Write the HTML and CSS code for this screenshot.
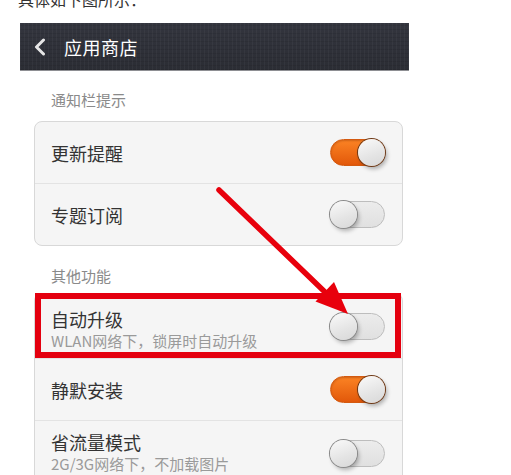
FILE: index.html
```html
<!DOCTYPE html>
<html lang="zh-CN">
<head>
<meta charset="utf-8">
<title>应用商店</title>
<link rel="stylesheet" href="styles.css">
</head>
<body>
<div class="intro"><p>具体如下图所示：</p></div>
<div class="phone">
  <div class="appbar">
    <svg class="back" width="12" height="18" viewBox="0 0 12 18"><polyline points="9.5,2 2.5,9 9.5,16" fill="none" stroke="#e6e6e6" stroke-width="3" stroke-linecap="round" stroke-linejoin="round"/></svg>
    <span class="title">应用商店</span>
  </div>
  <div class="content">
    <div class="section-label">通知栏提示</div>
    <div class="card">
      <div class="row">
        <span class="label">更新提醒</span>
        <span class="switch on"><span class="knob"></span></span>
      </div>
      <div class="row">
        <span class="label">专题订阅</span>
        <span class="switch"><span class="knob"></span></span>
      </div>
    </div>
    <div class="section-label second">其他功能</div>
    <div class="card open">
      <div class="row two marked">
        <div class="text">
          <span class="label">自动升级</span>
          <span class="sub">WLAN网络下，锁屏时自动升级</span>
        </div>
        <span class="switch"><span class="knob"></span></span>
        <span class="redbox"></span>
      </div>
      <div class="row">
        <span class="label">静默安装</span>
        <span class="switch on"><span class="knob"></span></span>
      </div>
      <div class="row two">
        <div class="text compact">
          <span class="label">省流量模式</span>
          <span class="sub">2G/3G网络下，不加载图片</span>
        </div>
        <span class="switch"><span class="knob"></span></span>
      </div>
    </div>
  </div>
</div>
<svg class="arrow" width="511" height="475" viewBox="0 0 511 475">
  <line x1="219" y1="190" x2="327" y2="294" stroke="#e8000c" stroke-width="5.5" stroke-linecap="round"/>
  <polygon points="348,314 315.5,301.5 334,282" fill="#e8000c"/>
</svg>
</body>
</html>
```
FILE: styles.css
```css
html, body {
  margin: 0;
  padding: 0;
  background: #ffffff;
  overflow: hidden;
}
body {
  font-family: "Noto Sans CJK SC", "Noto Sans", sans-serif;
  color: #333333;
  width: 511px;
  height: 475px;
  position: relative;
}
.intro {
  display: flex;
  height: 23px;
  padding-left: 18px;
}
.intro p {
  margin: -11px 0 0;
  font-size: 16px;
  line-height: 20px;
  color: #333333;
}
.phone {
  margin-left: 20px;
  width: 389px;
}
.appbar {
  height: 47px;
  display: flex;
  align-items: center;
  padding-left: 14px;
  background-color: #2f3139;
  background-image:
    repeating-linear-gradient(90deg, rgba(255,255,255,0.035) 0 1px, transparent 1px 4px),
    repeating-linear-gradient(0deg, rgba(0,0,0,0.08) 0 1px, transparent 1px 4px),
    linear-gradient(#33353e, #2b2d34);
  border-bottom: 1px solid #8e8f93;
}
.back {
  display: block;
}
.title {
  margin-left: 18px;
  color: #ffffff;
  font-size: 18px;
  line-height: 24px;
  letter-spacing: 0.5px;
}
.content {
  padding: 0 6px 0 14px;
  background: #ffffff;
}
.section-label {
  font-size: 15px;
  line-height: 20px;
  color: #8a8a8a;
  padding: 19px 0 11px 17px;
}
.section-label.second {
  padding: 20px 0 7px 17px;
}
.card {
  background: #f5f5f5;
  border: 1px solid #d8d8d8;
  border-radius: 8px;
}
.card.open {
  border-bottom: none;
  border-radius: 8px 8px 0 0;
}
.row {
  height: 61px;
  display: flex;
  align-items: center;
  justify-content: space-between;
  padding: 0 17px 0 16px;
}
.row + .row {
  border-top: 1px solid #e3e3e3;
}
.row.two {
  height: 64px;
}
.row.marked {
  position: relative;
}
.text {
  display: flex;
  flex-direction: column;
  margin-top: 8px;
}
.text.compact {
  margin-top: 0;
}
.label {
  font-size: 18px;
  line-height: 22px;
  color: #333333;
}
.sub {
  font-size: 15px;
  line-height: 22px;
  color: #9a9a9a;
}
.switch {
  width: 55px;
  height: 27px;
  box-sizing: border-box;
  border-radius: 14px;
  display: flex;
  align-items: center;
  justify-content: flex-start;
  background: linear-gradient(#ececec, #e0e0e0);
  border: 1px solid #bdbdbd;
  flex-shrink: 0;
}
.switch.on {
  justify-content: flex-end;
  background: linear-gradient(#fb8324, #e2580a);
  border: 1px solid #d45a10;
  box-shadow: inset 0 1px 2px rgba(120,40,0,0.35);
}
.knob {
  width: 27px;
  height: 27px;
  margin: -1px;
  border-radius: 50%;
  background: linear-gradient(160deg, #fafafa, #e4e4e4 60%, #d8d8d8);
  box-shadow: 0 0 0 1px #8a8a8a, 2px 3px 4px rgba(0,0,0,0.28);
}
.switch.on .knob {
  box-shadow: 0 0 0 1px #6e3a18, 2px 3px 4px rgba(0,0,0,0.3);
}
.redbox {
  position: absolute;
  left: 0;
  right: 1px;
  top: -1px;
  bottom: 0;
  border: 6px solid #e4000f;
  box-sizing: border-box;
  pointer-events: none;
}
.arrow {
  position: absolute;
  top: 0;
  left: 0;
  pointer-events: none;
}
```
